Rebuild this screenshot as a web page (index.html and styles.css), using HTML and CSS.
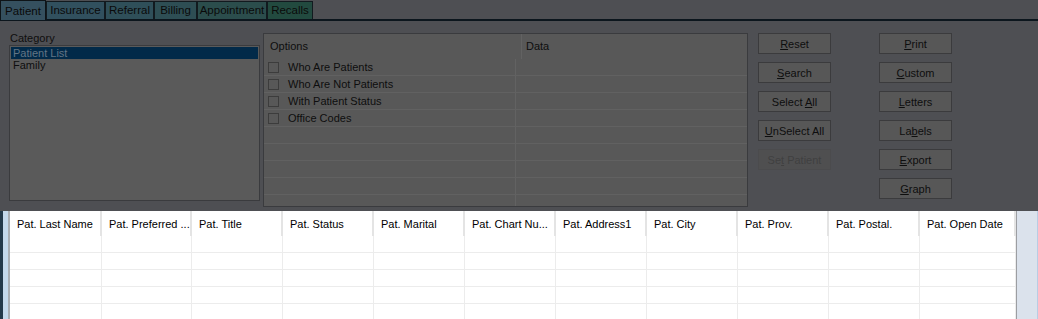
FILE: index.html
```html
<!DOCTYPE html>
<html lang="en">
<head>
  <meta charset="UTF-8">
  <title>Patient Search</title>
  <link rel="stylesheet" href="styles.css">
</head>
<body>
  <div class="tabs">
    <div class="tab active t1">Patient</div>
    <div class="tab t2">Insurance</div>
    <div class="tab t3">Referral</div>
    <div class="tab t4">Billing</div>
    <div class="tab t5">Appointment</div>
    <div class="tab t6">Recalls</div>
  </div>

  <div class="panel">
    <div class="category">
      <div class="label">Category</div>
      <ul class="listbox">
        <li class="selected">Patient List</li>
        <li>Family</li>
      </ul>
    </div>

    <div class="options">
      <div class="opt-row opt-head">
        <div class="col-opt">Options</div>
        <div class="col-data">Data</div>
      </div>
      <div class="opt-row"><div class="col-opt"><span class="check"></span>Who Are Patients</div><div class="col-data"></div></div>
      <div class="opt-row"><div class="col-opt"><span class="check"></span>Who Are Not Patients</div><div class="col-data"></div></div>
      <div class="opt-row"><div class="col-opt"><span class="check"></span>With Patient Status</div><div class="col-data"></div></div>
      <div class="opt-row"><div class="col-opt"><span class="check"></span>Office Codes</div><div class="col-data"></div></div>
      <div class="opt-row"><div class="col-opt"></div><div class="col-data"></div></div>
      <div class="opt-row"><div class="col-opt"></div><div class="col-data"></div></div>
      <div class="opt-row"><div class="col-opt"></div><div class="col-data"></div></div>
      <div class="opt-row"><div class="col-opt"></div><div class="col-data"></div></div>
      <div class="opt-row last"><div class="col-opt"></div><div class="col-data"></div></div>
    </div>

    <div class="btn-col">
      <button class="btn"><u>R</u>eset</button>
      <button class="btn"><u>S</u>earch</button>
      <button class="btn">Select <u>A</u>ll</button>
      <button class="btn"><u>U</u>nSelect All</button>
      <button class="btn disabled">Se<u>t</u> Patient</button>
    </div>
    <div class="btn-col second">
      <button class="btn"><u>P</u>rint</button>
      <button class="btn"><u>C</u>ustom</button>
      <button class="btn"><u>L</u>etters</button>
      <button class="btn">La<u>b</u>els</button>
      <button class="btn"><u>E</u>xport</button>
      <button class="btn"><u>G</u>raph</button>
    </div>
  </div>

  <div class="results">
    <div class="edge-left"></div>
    <div class="grid">
      <div class="head">Pat. Last Name</div>
      <div class="head">Pat. Preferred ...</div>
      <div class="head">Pat. Title</div>
      <div class="head">Pat. Status</div>
      <div class="head">Pat. Marital</div>
      <div class="head">Pat. Chart Nu...</div>
      <div class="head">Pat. Address1</div>
      <div class="head">Pat. City</div>
      <div class="head">Pat. Prov.</div>
      <div class="head">Pat. Postal.</div>
      <div class="head">Pat. Open Date</div>
    </div>
    <div class="edge-right"></div>
  </div>
  <script>
    // empty result rows under the header
    const grid = document.querySelector(".grid");
    for (let r = 0; r < 5; r++) {
      for (let c = 0; c < 11; c++) {
        const cell = document.createElement("div");
        cell.className = "cell";
        grid.appendChild(cell);
      }
    }
  </script>
</body>
</html>
```

FILE: styles.css
```css
body {
  margin: 0;
  width: 1038px;
  height: 319px;
  overflow: hidden;
  background: #4e4f53;
  font-family: "Liberation Sans", Arial, sans-serif;
  font-size: 11px;
  color: #0e0e0e;
}

/* tab strip */
.tabs {
  display: flex;
  height: 19px;
  border-bottom: 2px solid #0c161d;
  align-items: flex-end;
}

.tab {
  box-sizing: border-box;
  height: 18px;
  line-height: 17px;
  text-align: center;
  border: 1px solid #121a1f;
  border-bottom: none;
  font-size: 11.5px;
  color: #0a0a0a;
}

.tab.active {
  height: 20px;
  line-height: 21px;
  margin-bottom: -1px;
  border-color: #0e1418;
}

.t1 { width: 46px; background: #35505f; }
.t2 { width: 59px; background: #31505e; }
.t3 { width: 49px; background: #2f4f59; }
.t4 { width: 43px; background: #2e4e54; }
.t5 { width: 70px; background: #2b4d4c; }
.t6 { width: 46px; background: #224a3f; }

/* search panel */
.panel {
  display: flex;
  height: 178px;
  padding: 11px 0 0 9px;
  border-left: 2px solid #2b4556;
  margin-left: -2px;
}

.category {
  width: 251px;
}

.label {
  height: 13px;
  line-height: 12px;
  padding-left: 1px;
}

.listbox {
  list-style: none;
  margin: 0;
  padding: 1px;
  height: 152px;
  border: 1px solid #3a3b3e;
  background: #5a5a5a;
}

.listbox li {
  height: 12px;
  line-height: 12px;
  padding-left: 2px;
}

.listbox li.selected {
  background: #022a49;
  color: #627585;
}

.options {
  width: 483px;
  height: 172px;
  margin: 1px 0 0 3px;
  border: 1px solid #3a3b3e;
  background: #585858;
  overflow: hidden;
}

.opt-row {
  display: flex;
  height: 16px;
  border-bottom: 1px solid #616161;
}

.opt-row.opt-head {
  height: 25px;
  border-bottom: none;
}

.opt-head .col-opt,
.opt-head .col-data {
  line-height: 25px;
  padding-left: 6px;
}

.opt-head .col-data {
  padding-left: 4px;
}

.col-opt {
  width: 251px;
  border-right: 1px solid #626262;
  display: flex;
  align-items: center;
  line-height: 16px;
}

.col-data {
  flex: 1;
}

.check {
  width: 9px;
  height: 9px;
  border: 1px solid #3c3c3c;
  margin: 0 9px 0 4px;
}

.btn-col {
  display: flex;
  flex-direction: column;
  gap: 8px;
  margin: 1px 0 0 10px;
}

.btn-col.second {
  margin-left: 48px;
}

.btn {
  width: 73px;
  height: 21px;
  padding: 0;
  border: 1px solid #3b3b3d;
  background: #575757;
  font-family: "Liberation Sans", Arial, sans-serif;
  font-size: 11px;
  color: #0e0e0e;
}

.btn.disabled {
  background: #4f4f50;
  border-color: #4b4b4d;
  color: #404040;
}

/* results grid */
.results {
  display: flex;
  height: 109px;
  margin-top: 1px;
}

.edge-left {
  width: 5px;
  border-left: 3px solid #22384a;
  border-right: 2px solid #a9aeb4;
  background: #c3d8ec;
}

.edge-right {
  flex: 1;
  border-left: 1px solid #9c9ea2;
  border-right: 1px solid #b8cde4;
  background: #dbe2ec;
}

.grid {
  display: grid;
  grid-template-columns: 92px 90px repeat(8, 91px) 96px;
  grid-auto-rows: 17px;
  grid-template-rows: 25px;
  align-content: start;
  width: 1006px;
  background: #fff;
  overflow: hidden;
}

.head {
  box-sizing: border-box;
  padding: 1px 0 0 7px;
  line-height: 24px;
  color: #000;
  border-right: 2px solid #e4e4e4;
  white-space: nowrap;
  overflow: hidden;
}

.cell {
  border-right: 1px solid #ececec;
  border-bottom: 1px solid #ececec;
}
```
